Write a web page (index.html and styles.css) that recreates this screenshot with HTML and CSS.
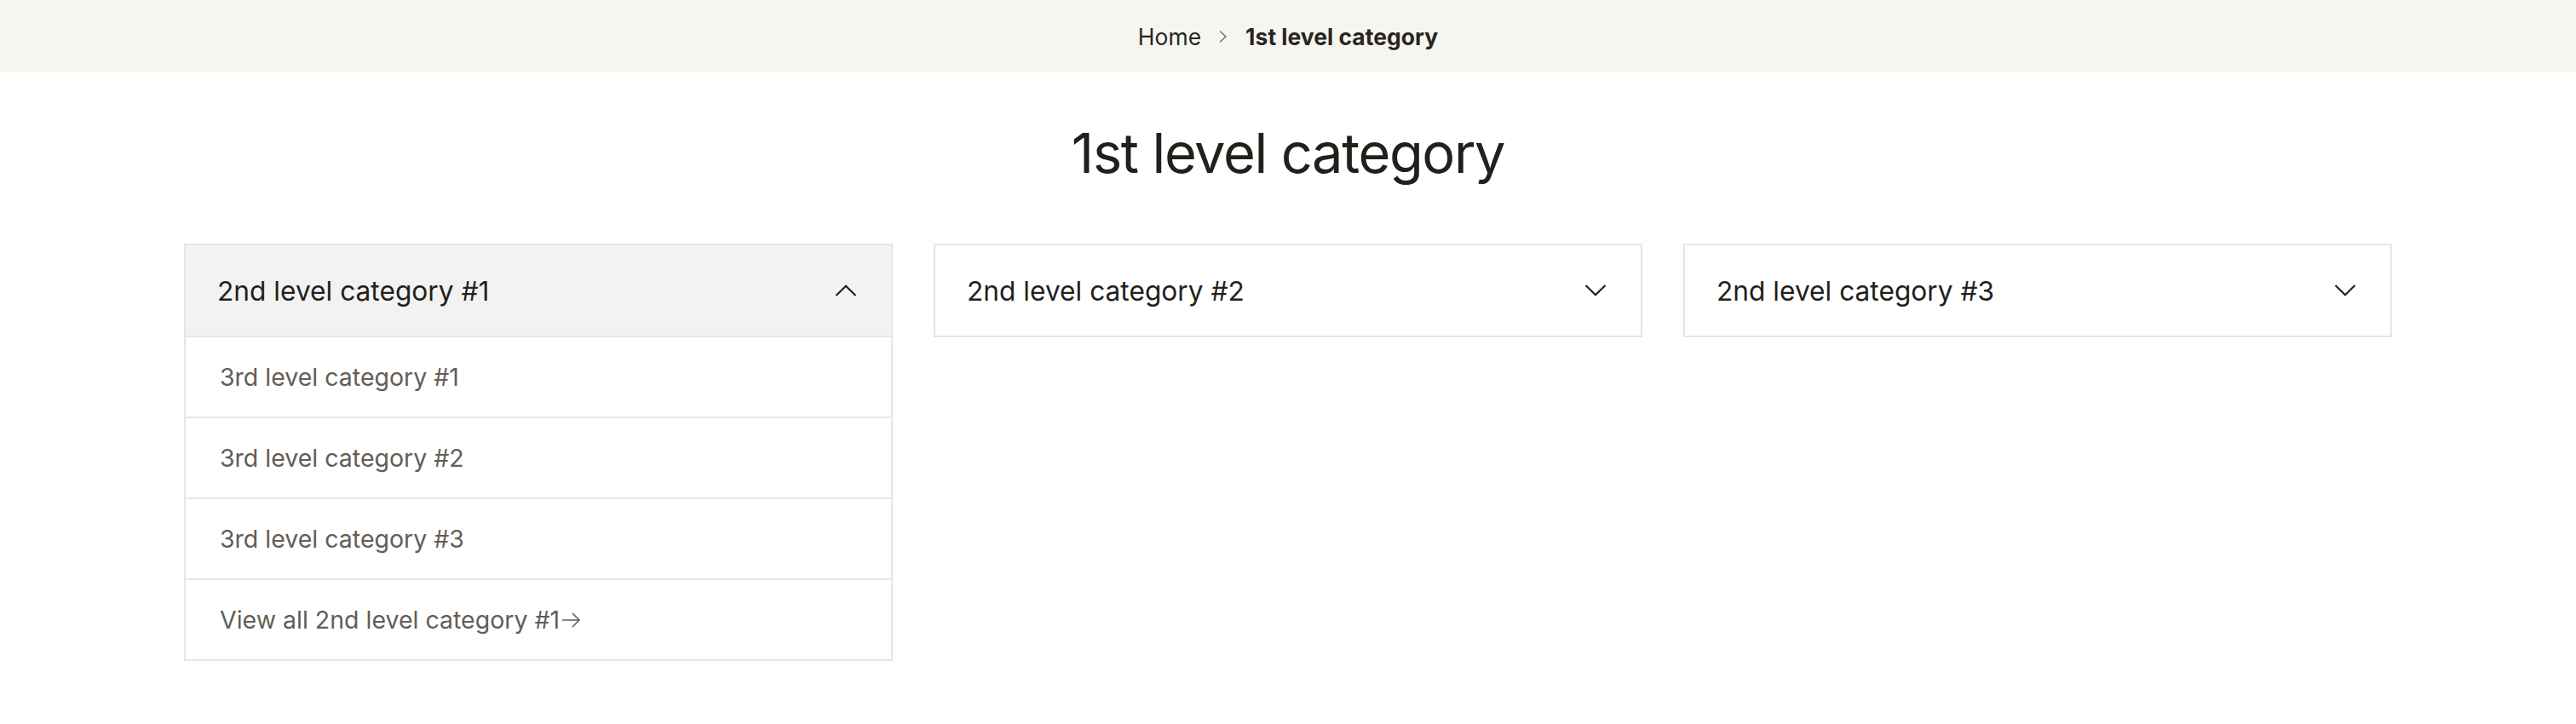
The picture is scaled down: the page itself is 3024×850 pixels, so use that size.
FILE: index.html
```html
<!DOCTYPE html>
<html lang="en">
<head>
<meta charset="utf-8">
<title>1st level category</title>
<link rel="stylesheet" href="styles.css">
</head>
<body>
<nav class="breadcrumb">
  <a class="crumb" href="#">Home</a>
  <svg class="crumb-sep" width="12" height="16" viewBox="0 0 12 16"><path d="M2 1.5 L9 8 L2 14.5" fill="none" stroke="#7a7570" stroke-width="1.6"/></svg>
  <span class="crumb current">1st level category</span>
</nav>
<h1 class="title">1st level category</h1>
<div class="grid">
  <section class="panel">
    <div class="panel-head open">
      <span class="panel-title">2nd level category #1</span>
      <svg class="chev" width="26" height="14" viewBox="0 0 26 14"><path d="M1.5 13 L13 1.8 L24.5 13" fill="none" stroke="#231f1b" stroke-width="2.2"/></svg>
    </div>
    <a class="item" href="#">3rd level category #1</a>
    <a class="item" href="#">3rd level category #2</a>
    <a class="item" href="#">3rd level category #3</a>
    <a class="item" href="#">View all 2nd level category #1<svg class="arrow" width="24" height="20" viewBox="0 0 24 20"><path d="M1 10 H21 M13 2 L21 10 L13 18" fill="none" stroke="#635d57" stroke-width="1.6"/></svg></a>
  </section>
  <section class="panel">
    <div class="panel-head">
      <span class="panel-title">2nd level category #2</span>
      <svg class="chev" width="26" height="14" viewBox="0 0 26 14"><path d="M1.5 1 L13 12.2 L24.5 1" fill="none" stroke="#231f1b" stroke-width="2.2"/></svg>
    </div>
  </section>
  <section class="panel">
    <div class="panel-head">
      <span class="panel-title">2nd level category #3</span>
      <svg class="chev" width="26" height="14" viewBox="0 0 26 14"><path d="M1.5 1 L13 12.2 L24.5 1" fill="none" stroke="#231f1b" stroke-width="2.2"/></svg>
    </div>
  </section>
</div>
</body>
</html>
```
FILE: styles.css
```css
* { box-sizing: border-box; }
body {
  margin: 0;
  background: #ffffff;
  font-family: Inter, "Liberation Sans", sans-serif;
  color: #231f1b;
}
.breadcrumb {
  height: 85px;
  background: #f6f6f1;
  display: flex;
  align-items: center;
  justify-content: center;
  gap: 20px;
  font-size: 26.5px;
}
.crumb { color: #2a2521; text-decoration: none; }
.crumb.current { font-weight: 700; }
.crumb-sep { display: block; }
.title {
  margin: 55px 0 66px;
  text-align: center;
  font-size: 65px;
  letter-spacing: -1.4px;
  font-weight: 400;
  line-height: 80px;
  color: #231f1b;
}
.grid {
  display: grid;
  grid-template-columns: repeat(3, 1fr);
  gap: 48px;
  padding: 0 216px;
  align-items: start;
}
.panel {
  border: 2px solid #e6e6e6;
  display: flex;
  flex-direction: column;
}
.panel-head {
  height: 106px;
  display: flex;
  align-items: center;
  justify-content: space-between;
  padding: 0 40px 0 37px;
}
.panel-head.open { background: #f2f2f2; border-bottom: 2px solid #e6e6e6; height: 108px; }
.panel-title { font-size: 31.7px; color: #231f1b; }
.chev { display: block; }
.item {
  height: 95px;
  display: flex;
  align-items: center;
  padding: 0 40px;
  font-size: 28.5px;
  color: #635d57;
  text-decoration: none;
  border-top: 2px solid #e6e6e6;
}
.panel-head.open + .item { border-top: none; height: 93px; }
.arrow { display: block; margin-left: 2px; }
```
